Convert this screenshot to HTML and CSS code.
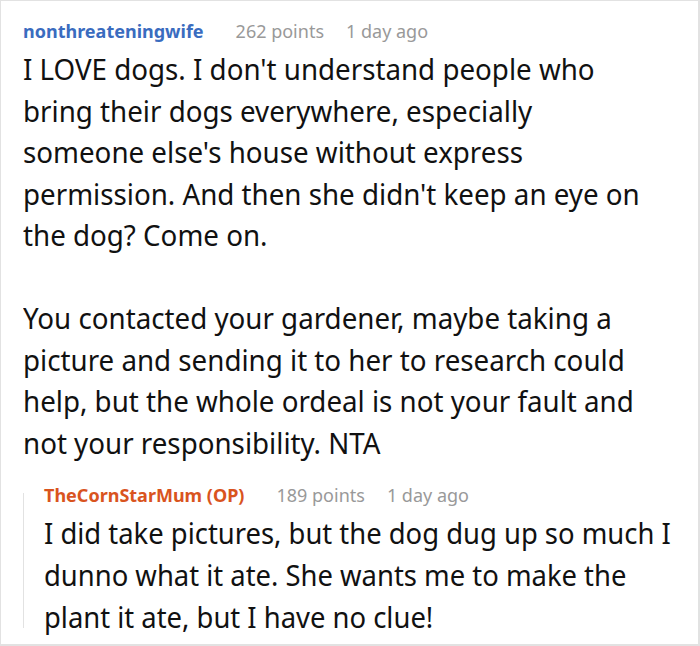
FILE: index.html
```html
<!DOCTYPE html>
<html>
<head>
<meta charset="utf-8">
<link rel="stylesheet" href="styles.css">
</head>
<body>
<div class="card">
  <div class="meta">
    <span class="user">nonthreateningwife</span>
    <span class="info">262 points</span>
    <span class="info">1 day ago</span>
  </div>
  <div class="body">
    <p>I LOVE dogs. I don't understand people who<br>bring their dogs everywhere, especially<br>someone else's house without express<br>permission. And then she didn't keep an eye on<br>the dog? Come on.</p>
    <p>You contacted your gardener, maybe taking a<br>picture and sending it to her to research could<br>help, but the whole ordeal is not your fault and<br>not your responsibility. NTA</p>
  </div>
  <div class="reply">
    <div class="meta">
      <span class="user op">TheCornStarMum (OP)</span>
      <span class="info">189 points</span>
      <span class="info">1 day ago</span>
    </div>
    <div class="body reply-body">
      <p>I did take pictures, but the dog dug up so much I<br>dunno what it ate. She wants me to make the<br>plant it ate, but I have no clue!</p>
    </div>
  </div>
</div>
</body>
</html>
```
FILE: styles.css
```css
html, body {
  margin: 0;
  padding: 0;
  background: #fff;
}
.card {
  box-sizing: border-box;
  width: 700px;
  height: 646px;
  border: 1px solid #e2e2e2;
  border-right-width: 2px;
  border-bottom-width: 2px;
  padding: 16px 8px 0 22px;
  font-family: "Noto Sans", "Open Sans", sans-serif;
  color: #111;
  overflow: hidden;
}
.meta {
  display: flex;
  gap: 22px;
  font-size: 18px;
  line-height: 28px;
}
.user {
  font-weight: 700;
  color: #3a6cbf;
  margin-right: 10px;
}
.info {
  color: #999;
}
.body {
  margin-top: 3px;
}
.body p {
  margin: 0 0 41.5px 0;
  font-size: 29px;
  line-height: 41.5px;
  white-space: nowrap;
  transform: scaleX(0.956);
  transform-origin: left top;
}
.body p:last-child {
  margin-bottom: 0;
}
.reply {
  position: relative;
  margin-top: 18px;
  padding-left: 21px;
}
.reply::before {
  content: "";
  position: absolute;
  left: 0;
  top: 12px;
  bottom: 10px;
  border-left: 1px solid #e2e2e2;
}
.reply-body {
  margin-top: 3px;
}
.reply-body p {
  line-height: 42px;
  transform: scaleX(0.945);
}
.op {
  color: #d9541e;
}
```
